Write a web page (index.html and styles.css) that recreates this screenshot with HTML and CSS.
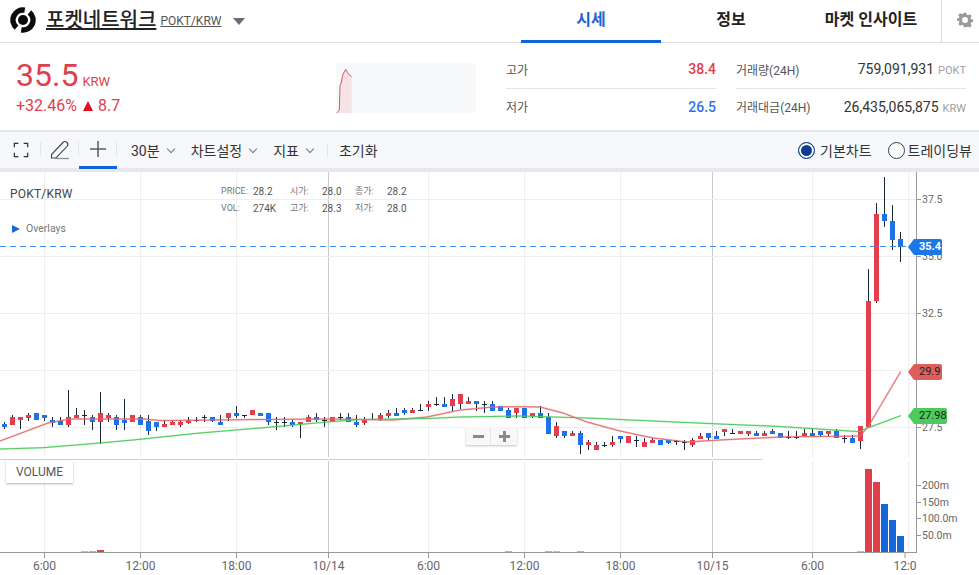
FILE: index.html
```html
<!DOCTYPE html>
<html lang="ko">
<head>
<meta charset="utf-8">
<title>포켓네트워크 POKT/KRW</title>
<link rel="stylesheet" href="styles.css">
</head>
<body>
<header class="top">
  <div class="brand">
    <svg class="logo" width="26" height="26" viewBox="0 0 26 26">
      <path d="M19.43 5.34 A10 10 0 0 1 11.26 22.85 M6.57 20.66 A10 10 0 0 1 14.74 3.15" fill="none" stroke="#0b0b0b" stroke-width="5.500"/>
      <circle cx="13" cy="13" r="5" fill="#0b0b0b"/>
    </svg>
    <a class="name">포켓네트워크</a>
    <a class="pair">POKT/KRW</a>
    <span class="caret"></span>
  </div>
  <nav class="tabs">
    <a class="tab active">시세</a>
    <a class="tab">정보</a>
    <a class="tab">마켓 인사이트</a>
    <span class="gear">
      <svg width="16" height="16" viewBox="0 0 24 24"><path fill="#9a9a9a" d="M10 1h4l.6 3.200 2 .8 2.700-1.800 2.800 2.800-1.800 2.700.8 2 3.200.6v4l-3.200.6-.8 2 1.800 2.700-2.800 2.800-2.700-1.800-2 .8L14 23h-4l-.6-3.200-2-.8-2.700 1.800-2.800-2.800 1.800-2.700-.8-2L-.3 13.700v-4l3.200-.6.8-2L1.900 4.400l2.800-2.800 2.700 1.800 2-.8zM12 7.500a4.500 4.500 0 1 0 0 9 4.500 4.500 0 0 0 0-9z" fill-rule="evenodd"/></svg>
    </span>
  </nav>
</header>

<section class="summary">
  <div class="price">
    <div class="now"><span class="big">35.5</span><span class="unit">KRW</span></div>
    <div class="change"><span>+32.46%</span><span class="tri"></span><span>8.7</span></div>
  </div>
  <svg class="spark" width="140" height="50" viewBox="336 63 140 50">
    <path d="M336.700 113 L339.300 110 L340 85 L342.700 75 L345.700 69.300 L348.300 74 L351.700 76.700 V113 Z" fill="#f6e3e6"/>
    <path d="M336.700 113 L338.500 111 L339.300 110 L340 85 L341 84 L342.700 75 L345.700 69.300 L348.300 74 L351.700 76.700" fill="none" stroke="#e0566a" stroke-width="1"/>
  </svg>
  <dl class="stats hl">
    <div class="row"><dt>고가</dt><dd class="up">38.4</dd></div>
    <div class="row"><dt>저가</dt><dd class="down">26.5</dd></div>
  </dl>
  <dl class="stats vol">
    <div class="row"><dt>거래량(24H)</dt><dd>759,091,931<small>POKT</small></dd></div>
    <div class="row"><dt>거래대금(24H)</dt><dd>26,435,065,875<small>KRW</small></dd></div>
  </dl>
</section>

<section class="toolbar">
  <button class="tool">
    <svg width="16" height="16" viewBox="0 0 18 18"><path d="M1.500 6V1.500H6M12 1.500h4.500V6M16.500 12v4.500H12M6 16.500H1.500V12" fill="none" stroke="#333" stroke-width="1.400"/></svg>
  </button>
  <button class="tool pen">
    <svg width="22" height="22" viewBox="0 0 22 22"><path d="M2.500 19V15.500L14 3.500c1.200-1.200 2.800-1.200 4 0s1.100 2.800 0 4L7 19z" fill="none" stroke="#444" stroke-width="1.100"/><path d="M6 19.500h14" stroke="#8a8f99" stroke-width="1.300"/></svg>
  </button>
  <button class="tool cross">
    <svg width="18" height="18" viewBox="0 0 18 18"><path d="M9 1v16M1 9h16" stroke="#5a5a5a" stroke-width="1.500"/></svg>
  </button>
  <div class="menus">
    <a class="menu m30">30분<i class="chev"></i></a>
    <a class="menu">차트설정<i class="chev"></i></a>
    <a class="menu">지표<i class="chev"></i></a>
    <a class="menu reset">초기화</a>
  </div>
  <div class="views">
    <label class="radio on"><span class="dot"></span>기본차트</label>
    <label class="radio"><span class="dot"></span>트레이딩뷰</label>
  </div>
</section>

<section class="chart">
  <svg id="plot" class="plot" width="979" height="403" viewBox="0 172 979 403"></svg>
  <div class="legend-title">POKT/KRW</div>
  <div class="legend">
    <span class="k">PRICE:</span><span>28.2</span><span class="k">시가:</span><span>28.0</span><span class="k">종가:</span><span>28.2</span>
    <span class="k">VOL:</span><span>274K</span><span class="k">고가:</span><span>28.3</span><span class="k">저가:</span><span>28.0</span>
  </div>
  <div class="overlays"><i class="play"></i>Overlays</div>
  <div class="zoom"><span class="minus"></span><span class="plus"></span></div>
  <div class="volume-tag">VOLUME</div>
  <div class="tag t-blue">35.4</div>
  <div class="tag t-red">29.9</div>
  <div class="tag t-green">27.98</div>
</section>
<script src="chart.js"></script>
</body>
</html>
```

FILE: styles.css
```css
* { box-sizing: border-box; }
html, body { margin: 0; padding: 0; width: 979px; height: 575px; overflow: hidden; background: #fff; }
body { font-family: Roboto, "Noto Sans CJK KR", sans-serif; color: #333; font-size: 14px; }
a { text-decoration: none; color: inherit; }

.top { height: 43px; display: flex; justify-content: space-between; border-bottom: 1px solid #dcdde0; }
.brand { display: flex; align-items: center; padding-left: 10px; padding-bottom: 3px; }
.logo { margin-right: 10px; }
.name { font-size: 20px; font-weight: 500; color: #222; text-decoration: underline; line-height: 26px; }
.pair { font-size: 12px; color: #555; text-decoration: underline; margin-left: 4px; margin-top: 2px; }
.caret { width: 0; height: 0; border-left: 6.500px solid transparent; border-right: 6.500px solid transparent; border-top: 7px solid #666c7a; margin-left: 12px; margin-top: 3px; }

.tabs { display: flex; align-items: stretch; }
.tab { width: 140px; height: 43px; line-height: 40px; text-align: center; font-size: 16px; font-weight: 700; color: #222; }
.tab.active { color: #1a64d8; border-bottom: 3px solid #1264d8; }
.gear { width: 38px; height: 42px; border-left: 1px solid #dcdde0; display: flex; align-items: center; justify-content: center; padding: 0 0 2px 8px; }

.summary { height: 87px; display: flex; position: relative; }
.price { width: 336px; padding: 15px 0 0 16px; color: #e03e4b; flex: none; }
.now { display: flex; align-items: baseline; height: 34px; }
.big { font-size: 32px; line-height: 34px; }
.unit { font-size: 13px; margin-left: 4px; }
.change { display: flex; align-items: center; font-size: 16px; margin-top: 4px; line-height: 20px; }
.tri { width: 0; height: 0; border-left: 5px solid transparent; border-right: 5px solid transparent; border-bottom: 10px solid #e00f1e; margin: 0 5px 0 6px; }
.spark { margin-top: 20px; background: #f8f9fb; flex: none; }
.stats { margin: 7px 0 0; padding: 0; }
.hl { width: 210px; margin-left: 30px; }
.vol { width: 230px; margin-left: 20px; }
.row { display: flex; justify-content: space-between; align-items: center; height: 35px; }
.row:first-child { height: 39px; border-bottom: 1px solid #e4e5ea; }
dt { font-size: 12px; color: #555; }
dd { margin: 0; font-size: 14px; color: #333; }
dd small { font-size: 11px; color: #a0a0a0; margin-left: 4px; }
.up { color: #e03e4b; font-weight: 500; }
.down { color: #2f74e6; font-weight: 500; }

.toolbar { height: 42px; display: flex; align-items: stretch; background: #f7f8fb; border-top: 2px solid #e3e5ea; border-bottom: 4px solid #e6e8ee; }
.tool { width: 38px; padding: 0; border: 0; background: none; display: flex; align-items: center; justify-content: center; position: relative; }
.tool:first-child { width: 41px; }
.tool::after { content: ""; position: absolute; right: 0; top: 10px; height: 14px; width: 1px; background: #e4e5ea; }
.tool.cross { border-bottom: 3px solid #1264d8; height: 37px; }
.menus { display: flex; align-items: center; padding-left: 14px; flex: 1; height: 36px; font-size: 14px; color: #333; }
.menu { display: flex; align-items: center; margin-right: 16px; }
.chev { width: 6px; height: 6px; border-right: 1px solid #777; border-bottom: 1px solid #777; transform: rotate(45deg); margin: -3px 1px 0 8px; }
.reset { position: relative; margin-left: 9px; }
.reset::before { content: ""; position: absolute; left: -12px; top: 3px; height: 14px; width: 1px; background: #e4e5ea; }
.views { display: flex; align-items: center; height: 36px; padding-right: 7px; }
.radio { display: flex; align-items: center; font-size: 14px; color: #333; margin-left: 16px; }
.dot { width: 17px; height: 17px; border-radius: 50%; border: 1.500px solid #333a48; background: #fff; margin-right: 3px; }
.radio.on .dot { border-color: #0f3d91; background: #0f3d91; box-shadow: inset 0 0 0 2px #fff; margin-right: 5px; }

.chart { position: relative; height: 403px; }
.plot { display: block; }
.plot text { font-family: Roboto, sans-serif; fill: #666; }
.legend-title { position: absolute; left: 10px; top: 15px; font-size: 12px; color: #444; letter-spacing: .2px; }
.legend { position: absolute; left: 221px; top: 11px; display: grid; grid-template-columns: 32px 37px 32px 33px 32px 24px; grid-auto-rows: 17px; line-height: 17px; font-size: 10px; color: #555; white-space: nowrap; }
.legend .k { font-size: 9px; color: #777; }
.overlays { position: absolute; left: 12px; top: 50px; display: flex; align-items: center; font-size: 10.500px; color: #777; line-height: 14px; }
.play { width: 0; height: 0; border-top: 4px solid transparent; border-bottom: 4px solid transparent; border-left: 8px solid #1a64d8; margin-right: 6px; }
.zoom { position: absolute; left: 466px; top: 255px; width: 51px; height: 18px; background: #f8f8f8; box-shadow: 0 1px 2px rgba(0,0,0,.25); display: flex; }
.zoom span { width: 25px; position: relative; }
.minus::before, .plus::before, .plus::after { content: ""; position: absolute; background: #8a8a8a; }
.minus { border-right: 1px solid #e8e8e8; }
.minus::before { left: 7px; top: 7.500px; width: 11px; height: 3px; }
.plus::before { left: 8px; top: 7.500px; width: 11px; height: 3px; }
.plus::after { left: 12px; top: 3.500px; width: 3px; height: 11px; }
.volume-tag { position: absolute; left: 6px; top: 289px; width: 67px; height: 22px; background: #fff; box-shadow: 0 1px 2px rgba(0,0,0,.3); font-size: 12px; color: #555; line-height: 22px; text-align: center; }
.tag { position: absolute; left: 914px; height: 16px; line-height: 16px; padding: 0 3px 0 5px; font-size: 11px; border-radius: 0 2px 2px 0; }
.tag::before { content: ""; position: absolute; left: -6px; top: 0; border-top: 8px solid transparent; border-bottom: 8px solid transparent; border-right: 6px solid; border-right-color: inherit; }
.t-blue { top: 67px; background: #1b78ea; border-color: #1b78ea; color: #fff; font-weight: 700; width: 28px; }
.t-red { top: 192px; background: #dc5f5c; border-color: #dc5f5c; color: #222; width: 28px; }
.t-green { top: 236px; background: #4dcb5d; border-color: #4dcb5d; color: #222; width: 33px; }
```

FILE: chart.js
```js
// Data in 3x zoomed units relative to y=380: [wickTop, wickBottom, bodyTop, bodyBottom, kind]
const candles = [
"b127,146,132,141","r105,135,111,135","r111,146,111,120","r99,124,105,114","b99,120,99,120","b105,124,105,114",
"b111,140,120,130","b111,135,124,135","r30,140,111,135","r85,114,105,114","d90,134,105,107","b105,151,111,126",
"r37,192,99,126","r99,125,105,114","b105,151,111,135","b57,151,120,129","r105,126,105,126","b105,135,111,135",
"b105,166,123,152","b126,152,126,141","r120,141,132,141","r120,135,126,135","r120,140,126,135","r111,132,120,129",
"d111,126,121,123","d105,126,112,114","b111,126,111,124","b105,135,126,135","r99,124,99,114","b78,114,99,108",
"d105,114,105,107","r90,105,90,105","b99,108,99,108","b99,135,99,126","d111,151,125,127","d111,140,126,128",
"b120,140,126,135","r126,174,126,132","r105,126,111,126","b99,126,111,120","d111,140,120,122","r111,126,111,126",
"d99,120,112,114","b99,126,111,126","b105,140,126,135","r111,134,120,129","d99,120,118,120","r99,123,105,120",
"r90,114,99,108","b85,108,99,108","b85,105,90,99","r85,99,90,99","d72,93,90,92","r63,93,72,81",
"d51,78,72,74","b51,81,72,81","r42,93,57,78","r42,87,42,72","r51,72,63,72","b63,93,63,72",
"d63,99,72,74","b63,93,72,93","b78,93,78,93","b84,114,90,114","r84,114,84,99",
"b84,114,84,114","r99,114,99,108","b78,114,99,114","b99,162,111,162","r126,174,138,168","b153,174,153,168",
"r153,168,159,168","b153,222,159,195","r180,210,186,195","r186,210,195,210","d186,201,195,198","r168,201,186,195",
"b168,189,168,177","r168,189,168,189","d168,201,180,182","r175,201,186,201","r175,189,180,189","b180,195,180,195",
"b180,192,180,189","d180,195,182,184","d180,210,187,189","r175,201,180,195","r159,177,168,177","b159,183,159,174",
"b153,177,168,177","r147,168,147,156","d147,162,159,161","r153,162,153,162","r153,168,153,162","b153,168,159,168",
"r153,168,159,168","b147,162,153,162","b159,175,160,173",
"d153,177,171,173","d153,177,171,173","r147,169,160,169","b147,169,160,169","b153,169,153,165","r153,169,153,163",
"b147,173,153,173","d165,189,175,177","b165,189,175,188","r138,208,138,183"
];
const y = z => 380 + z / 3;
let wick = "", red = "", blue = "", doji = "";
const box = (x, t, w, h) => `M${x} ${t}h${w}v${h}h-${w}z`;
candles.forEach((s, i) => {
  const kind = s[0];
  const [wt, wb, bt, bb] = s.slice(1).split(",").map(Number).map(y);
  const x = 2 + 8 * i;
  wick += box(x + 2, Math.round(wt), 1, Math.round(wb) - Math.round(wt));
  const t = Math.round(bt), h = Math.max(1, Math.round(bb) - t);
  if (kind === "r") red += box(x, t, 5, h);
  if (kind === "b") blue += box(x, t, 5, h);
  if (kind === "d") doji += box(x, t, 5, 1);
});
// last large candles given in screen pixels
[["r", 868, 269, 427, 301, 427], ["r", 876, 203, 303, 214, 301], ["b", 884, 177, 227, 214, 221],
 ["b", 892, 205, 250, 221, 240], ["b", 900, 232, 262, 239, 247]].forEach(([k, c, wt, wb, bt, bb]) => {
  wick += box(c, wt, 1, wb - wt);
  if (k === "r") red += box(c - 2, bt, 5, bb - bt); else blue += box(c - 2, bt, 5, bb - bt);
});

const redMA = "0,441 48,423 70,419 100,419 144,419 160,420.6 260,419.5 328,419 393,420 427,417 460,410 493,407 520,406.700 540,407 563,413 587,422 620,431 653,438 687,442 720,440 780,437 860,436 868,427 900.600,371.700";
const greenMA = "0,449 43,447.700 100,443 133,440 200,433 260,428 327,422 360,419.500 427,418.500 460,417 520,416 587,418 653,421 720,424 780,426.500 860,431.700 865,429 900.600,415.700";

let g = "";
const line = (x1, y1, x2, y2, c) => `<line x1="${x1}" y1="${y1}" x2="${x2}" y2="${y2}" stroke="${c}"/>`;
const grid = [[44.5,"#eee"],[140.5,"#eee"],[236.5,"#eee"],[328.5,"#ccc"],[428.5,"#eee"],[524.5,"#eee"],[620.5,"#eee"],[712.5,"#ccc"],[812.5,"#eee"],[908.5,"#eee"]];
grid.forEach(([x, c]) => { g += line(x, 172, x, 457, c) + line(x, 461, x, 552, c); });
[199.5, 256.5, 313.5, 370.5, 427.5].forEach(v => { g += line(0, v, 916, v, "#eeeeee"); });
g += line(0, 459.5, 762, 459.5, "#cfcfcf");
g += line(916.5, 172, 916.5, 553, "#999") + line(0, 552.5, 917, 552.5, "#999");

const vol = [["r",81,551,.45],["b",89,551,.45],["r",97,550,1],["b",505,551,.45],["b",545,551,.45],["r",553,551,.45],["b",577,551,.45],["r",857,551,.45],
 ["r",865,469,1],["r",873,482,1],["b",881,504,1],["b",889,520,1],["b",897,536,1]];
vol.forEach(([k, x, t, o]) => {
  g += `<rect x="${x}" y="${t}" width="7" height="${552 - t}" fill="${k === "r" ? "#e03e4b" : "#1666dc"}" opacity="${o}"/>`;
});

g += `<polyline points="${redMA}" fill="none" stroke="#f0a3a3" stroke-width="2" opacity=".6"/>`;
g += `<polyline points="${greenMA}" fill="none" stroke="#a8e6ae" stroke-width="2" opacity=".6"/>`;
g += `<path d="${wick}" fill="#16283a"/><path d="${doji}" fill="#16283a"/><path d="${red}" fill="#e23e4c"/><path d="${blue}" fill="#1c72e6"/>`;
g += `<polyline points="${redMA}" fill="none" stroke="#e56d6d" stroke-width="1"/>`;
g += `<polyline points="${greenMA}" fill="none" stroke="#4fca5e" stroke-width="1"/>`;
g += `<line x1="0" y1="246.500" x2="908" y2="246.500" stroke="#3a8bf5" stroke-dasharray="6 4"/>`;

[["37.5",199],["35.0",256],["32.5",313],["27.5",427],["200m",485],["150m",502],["100.0m",518],["50.0m",535]].forEach(([t, v]) => {
  g += line(917, v + .5, 921, v + .5, "#999");
  g += `<text x="922" y="${v + 4}" font-size="10.500">${t}</text>`;
});
[["6:00",44.5],["12:00",140.5],["18:00",236.5],["10/14",328.5],["6:00",428.5],["12:00",524.5],["18:00",620.5],["10/15",712.5],["6:00",812.5],["12:0",905]].forEach(([t, x]) => {
  g += line(x, 553, x, 558, "#999");
  g += `<text x="${x}" y="570" font-size="12" text-anchor="middle">${t}</text>`;
});
document.getElementById("plot").innerHTML = g;
```
